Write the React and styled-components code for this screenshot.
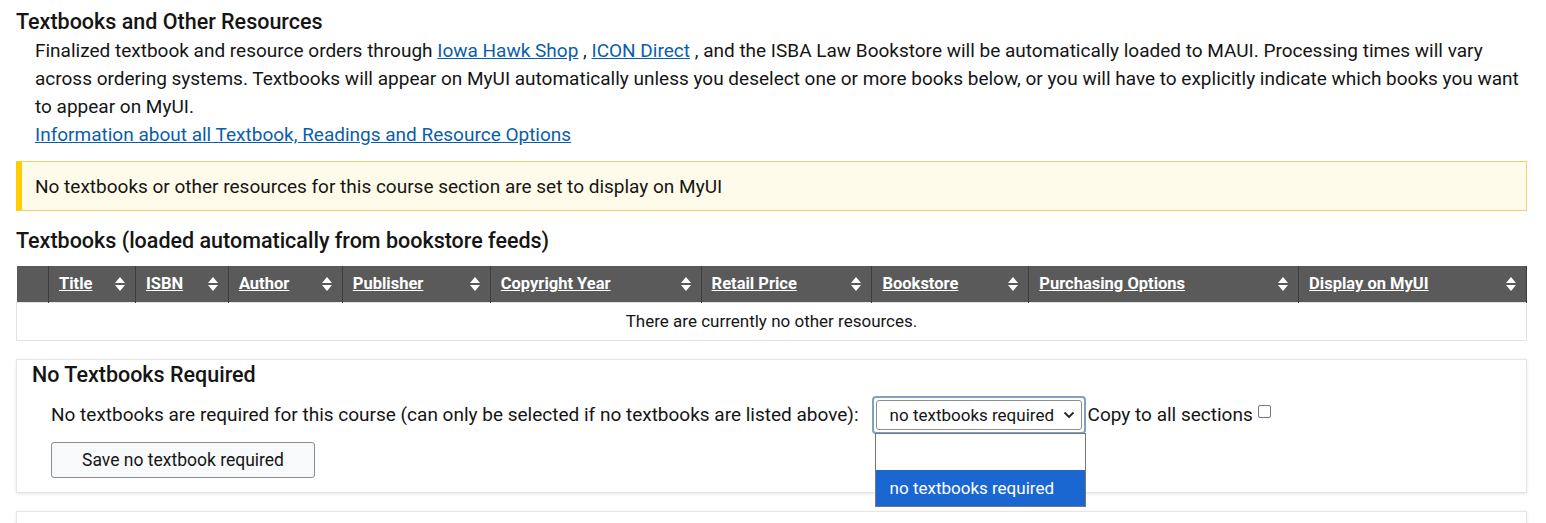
import React from "react";
import styled, { createGlobalStyle } from "styled-components";

const Global = createGlobalStyle`
  html, body { margin: 0; padding: 0; background: #fff; }
  body { font-family: Roboto, "Noto Sans", sans-serif; color: #151515; overflow: hidden; }
`;

const Page = styled.div`padding: 8px 16px 0 16px; width: 1511px;`;
const H2 = styled.h2`font-size: 21.5px; font-weight: 500; margin: 0; line-height: 28px;`;
const Intro = styled.div`padding-left: 19px; font-size: 19px; line-height: 28px; margin-top: 1px;`;
const A = styled.a`color: #0b5ea8; text-decoration: underline;`;
const Alert = styled.div`
  margin-top: 12px; height: 50px; box-sizing: border-box; background: #fffbea;
  border: 1px solid #f1d26b; border-left: 6px solid #ffcd00;
  display: flex; align-items: center; padding-left: 13px; font-size: 19px;
`;
const H3 = styled.h3`font-size: 21.5px; font-weight: 500; margin: 17px 0 12px; line-height: 26px;`;
const Table = styled.table`width: 100%; border-collapse: collapse; font-size: 16.5px;`;
const Th = styled.th`
  background: #5a5a5a; color: #fff; height: 36px; padding: 0 10px; text-align: left;
  border-right: 1px solid #3e3e3e; font-weight: 700; width: ${p => p.w}px; box-sizing: border-box;
  & > div { display: flex; align-items: center; justify-content: space-between; }
  & u { text-decoration: underline; }
`;
const Td = styled.td`text-align: center; height: 35px; border: 1px solid #e3e3e3; font-size: 17px;`;
const Card = styled.div`
  margin-top: 18px; border: 1px solid #e6e6e6; box-shadow: 0 1px 3px rgba(0,0,0,0.1);
  padding: 1px 15px 14px; position: relative; height: ${p => p.h || "auto"};
  box-sizing: border-box;
`;
const CardTitle = styled.div`font-size: 21.5px; font-weight: 500; line-height: 28px;`;
const Row = styled.div`display: flex; align-items: center; padding-left: 19px; margin-top: 7px; font-size: 19px;`;
const SelectBox = styled.div`
  margin-left: 13px; width: 214px; height: 38px; box-sizing: border-box; border-radius: 4px;
  border: 2px solid #7fa3bd; padding: 2px; position: relative;
`;
const SelectInner = styled.div`
  height: 100%; border: 1px solid #8d8d8d; border-radius: 3px; display: flex; align-items: center;
  justify-content: space-between; padding: 0 6px 0 13px; font-size: 17px; box-sizing: border-box;
`;
const List = styled.div`
  position: absolute; left: 1px; top: 35px; width: 209px; border: 1px solid #777; background: #fff; z-index: 2;
`;
const Opt = styled.div`
  height: ${p => p.h}px; display: flex; align-items: center; padding-left: 14px; font-size: 17px;
  background: ${p => (p.sel ? "#1a67d2" : "#fff")}; color: ${p => (p.sel ? "#fff" : "#151515")};
`;
const Check = styled.span`
  display: inline-block; width: 11px; height: 11px; border: 1px solid #767676; border-radius: 2px; margin-left: 5px; margin-top: -6px;
`;
const Btn = styled.button`
  margin: 8px 0 0 19px; width: 264px; height: 36px; border: 1px solid #8d8d8d; border-radius: 3px;
  background: #f8f9fa; font-family: inherit; font-size: 17.5px; color: #151515;
`;

const Sort = () => (
  <svg width="10" height="14" viewBox="0 0 10 14"><path d="M5 0L10 6H0Z M0 8H10L5 14Z" fill="#fff" /></svg>
);

const cols = [["", 32], ["Title", 87], ["ISBN", 93], ["Author", 114], ["Publisher", 148], ["Copyright Year", 211], ["Retail Price", 171], ["Bookstore", 157], ["Purchasing Options", 270], ["Display on MyUI", 228]];

export default function App() {
  return (
    <Page>
      <Global />
      <H2>Textbooks and Other Resources</H2>
      <Intro>
        Finalized textbook and resource orders through <A>Iowa Hawk Shop</A> , <A>ICON Direct</A> , and the ISBA Law Bookstore will be automatically loaded to MAUI. Processing times will vary across ordering systems. Textbooks will appear on MyUI automatically unless you deselect one or more books below, or you will have to explicitly indicate which books you want to appear on MyUI.
        <br />
        <A>Information about all Textbook, Readings and Resource Options</A>
      </Intro>
      <Alert>No textbooks or other resources for this course section are set to display on MyUI</Alert>
      <H3>Textbooks (loaded automatically from bookstore feeds)</H3>
      <Table>
        <thead>
          <tr>
            {cols.map(([n, w], i) => (
              <Th key={i} w={w}>{n && <div><u>{n}</u><Sort /></div>}</Th>
            ))}
          </tr>
        </thead>
        <tbody><tr><Td colSpan={10}>There are currently no other resources.</Td></tr></tbody>
      </Table>
      <Card>
        <CardTitle>No Textbooks Required</CardTitle>
        <Row>
          No textbooks are required for this course (can only be selected if no textbooks are listed above):
          <SelectBox>
            <SelectInner>
              no textbooks required
              <svg width="12" height="8" viewBox="0 0 12 8"><path d="M1.5 1.5L6 6L10.5 1.5" stroke="#222" strokeWidth="1.8" fill="none" /></svg>
            </SelectInner>
            <List>
              <Opt h={36} />
              <Opt h={36} sel>no textbooks required</Opt>
            </List>
          </SelectBox>
          <span style={{ marginLeft: 2 }}>Copy to all sections</span>
          <Check />
        </Row>
        <Btn>Save no textbook required</Btn>
      </Card>
      <Card h="40px" />
    </Page>
  );
}
